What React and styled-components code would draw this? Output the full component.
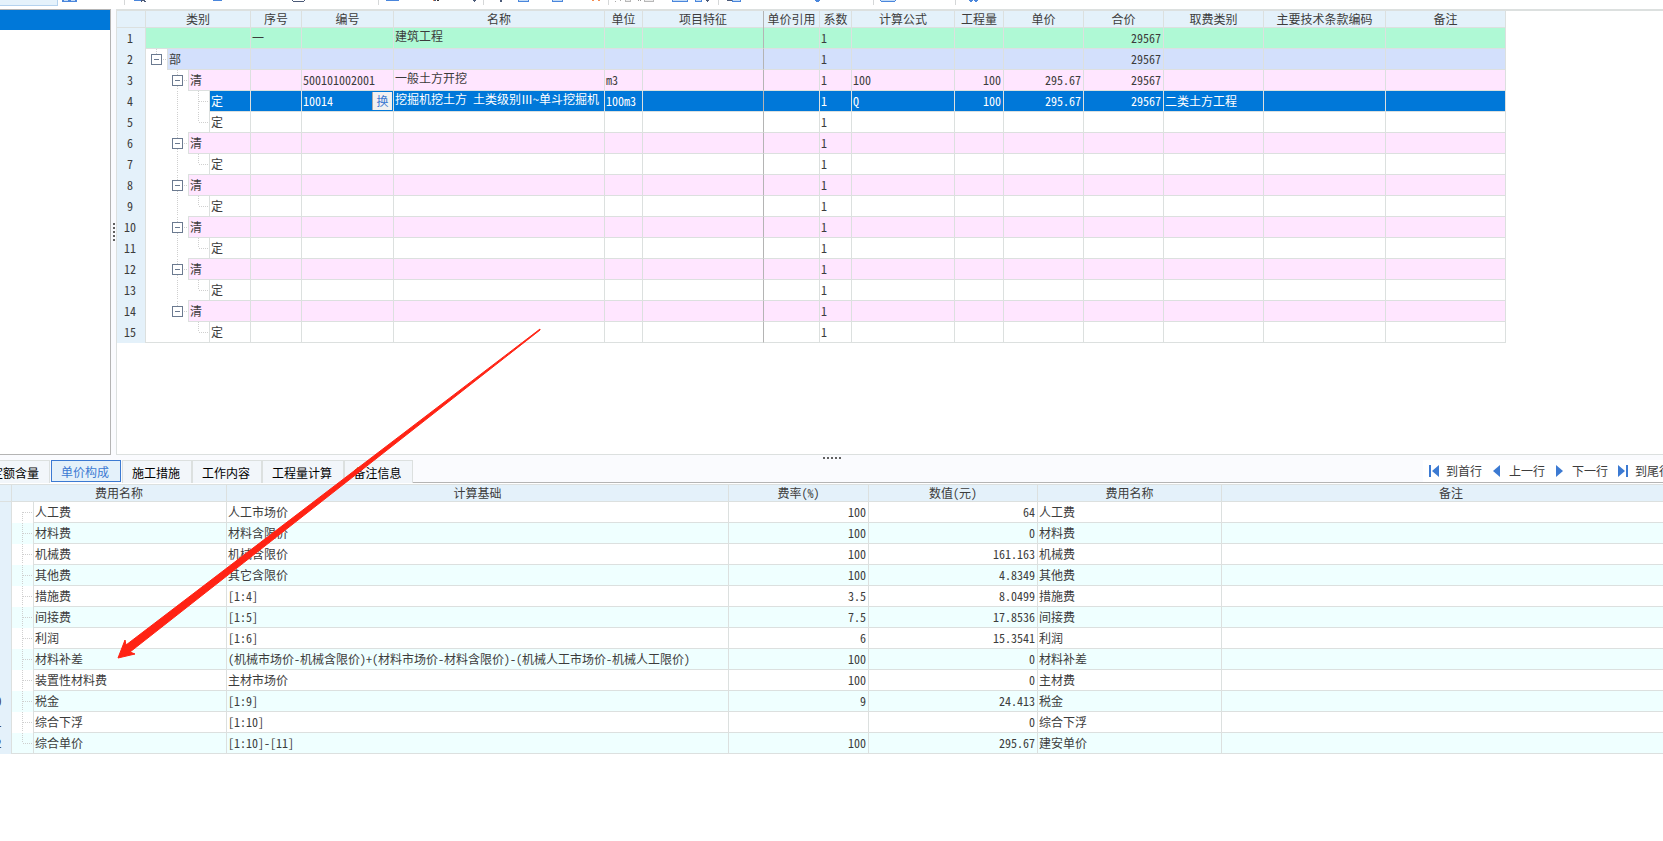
import React from "react";
import styled, { createGlobalStyle, css } from "styled-components";

const color = {
  line: "#dce0df",
  lineDark: "#b4b4b4",
  head: "#e4f1fa",
  accent: "#3c7ad2",
  selected: "#0078d9",
  text: "#3c3c3c",
  chrome: "#fafbfe",
  stripe: "#efffff",
};

const rowFill = {
  total: "#aff9d5",
  part: "#d3e0fc",
  list: "#ffe6ff",
  quota: "#ffffff",
  selected: color.selected,
};

const GlobalStyle = createGlobalStyle`
  * { box-sizing: border-box; }
  html, body { margin: 0; overflow: hidden; background: #fff; }
  body, button {
    font-family: "Noto Sans CJK SC", sans-serif;
    font-size: 12px;
    font-feature-settings: "hwid";
    color: ${color.text};
  }
`;

const Page = styled.div`
  position: relative;
  display: flex;
  flex-direction: column;
  height: 100vh;
  overflow: hidden;
`;

/* ---------- toolbar ---------- */

const Toolbar = styled.header`
  display: flex;
  flex: 0 0 9px;
  align-items: flex-start;
  overflow: hidden;
`;

const ActiveTool = styled.div`
  width: 58px;
  height: 6px;
  background: #e5f2fb;
  border: solid #b4d2ee;
  border-width: 0 1px 1px 0;
`;

const ToolGroup = styled.div`
  width: ${(p) => p.$w}px;
  height: 5px;
  border-right: 1px solid ${(p) => (p.$last ? "transparent" : "#d5d7d8")};
  svg { display: block; }
`;

const B = "#4a86dc";
const L = "#c3dcf8";
const D = "#4c5a78";

/* each icon edge: [x, y, width, height, fill] */
const toolGroups = [
  { w: 67, bits: [[4, 0, 15, 2, B], [6, 0, 4, 1, L], [13, 0, 4, 1, L]] },
  {
    w: 254,
    bits: [[9, 0, 9, 1, B], [16, 0, 4, 1, D], [16, 1, 1, 1, D], [19, 1, 2, 1, D], [88, 0, 9, 1, B],
      [167, 0, 1, 1, D], [179, 0, 1, 1, D], [168, 1, 11, 1, D]],
  },
  {
    w: 105,
    bits: [[7, 0, 13, 1, B], [54, 0, 1, 1, "#ee8144"], [55, 0, 2, 1, D], [58, 0, 2, 1, "#333"], [94, 0, 3, 1, D], [95, 1, 1, 1, D]],
  },
  {
    w: 125,
    bits: [[16, 0, 2, 2, D], [34, 0, 11, 2, B], [35, 0, 9, 1, L], [68, 0, 11, 2, B], [69, 0, 9, 1, L],
      [108, 0, 2, 1, "#f68c50"], [114, 0, 2, 1, "#f68c50"]],
  },
  {
    w: 110,
    bits: [[6, 1, 1, 1, "#aaa"], [11, 0, 1, 1, "#aaa"], [16, 0, 6, 2, "#b8b8b8"], [17, 0, 4, 1, "#eee"],
      [29, 0, 1, 1, "#999"], [31, 0, 1, 1, "#999"], [35, 0, 10, 2, "#b8b8b8"], [36, 0, 8, 1, "#eee"],
      [63, 0, 16, 2, B], [64, 0, 14, 1, L], [86, 0, 7, 2, B], [87, 0, 5, 1, L], [97, 0, 3, 1, D], [98, 1, 1, 1, D]],
  },
  { w: 155, bits: [[8, 0, 6, 1, D], [13, 0, 9, 2, B], [14, 0, 7, 1, L], [96, 0, 5, 1, B], [97, 1, 3, 1, B]] },
  { w: 82, bits: [[6, 0, 16, 1, B], [7, 1, 14, 1, B], [7, 0, 14, 1, L]] },
  { w: 40, last: true, bits: [[13, 0, 4, 1, B], [18, 0, 4, 1, B], [14, 1, 2, 1, B], [19, 1, 2, 1, B]] },
];

/* ---------- upper pane ---------- */

const Upper = styled.main`
  display: flex;
  flex: 1 1 0;
  min-height: 0;
`;

const Navigator = styled.aside`
  flex: 0 0 111px;
  border: solid ${color.lineDark};
  border-width: 1px 1px 1px 0;
`;

const NavigatorItem = styled.div`
  height: 20px;
  background: ${color.selected};
`;

const Grip = styled.div`
  display: flex;
  flex: 0 0 5px;
  flex-direction: ${(p) => (p.$vertical ? "column" : "row")};
  align-items: center;
  justify-content: center;
  gap: 2px;
  background: ${color.chrome};
  i { width: 2px; height: 2px; background: #606060; }
`;

const GridPane = styled.section`
  flex: 1 1 0;
  min-width: 0;
  border: solid ${color.line};
  border-width: 2px 0 1px 1px;
  overflow: hidden;
`;

const Sheet = styled.table`
  table-layout: fixed;
  border-collapse: separate;
  border-spacing: 0;
  width: ${(p) => (p.$fluid ? "100%" : "1389px")};
`;

const HeadCell = styled.th`
  height: 17px;
  padding: 0 0 2px;
  font-weight: 400;
  line-height: 15px;
  white-space: nowrap;
  background: ${color.head};
  border: solid ${(p) => (p.$frozen ? color.lineDark : color.line)};
  border-width: 0 1px 0 0;
  box-shadow: inset 0 -1px ${color.line};
`;

const NumberCell = styled.th`
  height: 21px;
  padding: 0 2px 2px 0;
  font-weight: 400;
  line-height: 19px;
  text-align: center;
  background: ${color.head};
  border-right: 1px solid ${color.line};
`;

const Cell = styled.td`
  height: 21px;
  padding: 0 2px 0 1px;
  line-height: 20px;
  white-space: nowrap;
  overflow: hidden;
  text-align: ${(p) => (p.$right ? "right" : "left")};
  color: ${(p) => (p.$kind === "selected" ? "#fff" : "inherit")};
  background: ${(p) => (p.$kind ? rowFill[p.$kind] : "transparent")};
  border: solid ${color.line};
  border-width: 0 1px 1px 0;
  ${(p) => p.$frozen && css`border-right-color: ${color.lineDark};`}
  ${(p) => p.$raised && css`line-height: 16px; vertical-align: top;`}
`;

const TreeCell = styled.td`
  height: 21px;
  padding: 0;
  border-right: 1px solid ${color.line};
`;

const TreeLine = styled.div`
  display: flex;
  height: 21px;
`;

const Segment = styled.span`
  display: grid;
  flex: 0 0 21px;
  place-items: center;
  border-bottom: 1px solid ${(p) => (p.$underline ? color.line : "transparent")};
  > * { grid-area: 1 / 1; }
`;

const Toggle = styled.button`
  display: grid;
  place-items: center;
  width: 11px;
  height: 11px;
  padding: 0;
  background: #fff;
  border: 1px solid #6b7a90;
  &::before { content: ""; width: 5px; height: 1px; background: #6b7a90; }
`;

const TreeLabel = styled.span`
  flex: 1;
  padding-left: 1px;
  line-height: 20px;
  color: ${(p) => (p.$kind === "selected" ? "#fff" : "inherit")};
  background: ${(p) => (p.$kind ? rowFill[p.$kind] : "transparent")};
  border-left: ${(p) => (p.$flush ? 0 : 1)}px solid ${color.line};
  border-bottom: 1px solid ${color.line};
`;

const CodeBox = styled.div`
  display: flex;
  align-items: center;
  justify-content: space-between;
`;

const SwapButton = styled.button`
  width: 20px;
  height: 18px;
  margin-right: -1px;
  padding: 0;
  line-height: 16px;
  color: ${color.accent};
  background: #f1f1f1;
  border: solid #aaa;
  border-width: 0 0 0 1px;
`;

/* dotted connectors of one tree level */
function Segm({ up, down, right, toggle, underline }) {
  const dots = { stroke: "#cfcfcf", strokeWidth: 1, strokeDasharray: "1 1", fill: "none" };
  return (
    <Segment $underline={underline}>
      <svg width="21" height="20" viewBox="0 0 21 20" aria-hidden="true">
        {up && <path d="M10.5 0V10" {...dots} />}
        {down && <path d="M10.5 10V20" {...dots} />}
        {right && <path d="M11 10.5H21" {...dots} />}
      </svg>
      {toggle && <Toggle type="button" aria-label="折叠" />}
    </Segment>
  );
}

const quotaColumns = [
  ["", 29], ["类别", 105], ["序号", 51], ["编号", 92], ["名称", 211], ["单位", 38], ["项目特征", 121],
  ["单价引用", 56], ["系数", 32], ["计算公式", 103], ["工程量", 49], ["单价", 80], ["合价", 80],
  ["取费类别", 100], ["主要技术条款编码", 122], ["备注", 120],
];

const emptyPairs = [0, 1, 2, 3, 4].flatMap(() => [
  { kind: "list", level: 2, label: "清" },
  { kind: "quota", level: 3, label: "定" },
]);

const quotaRows = [
  { kind: "total", level: 0, label: "", serial: "一", name: "建筑工程", sum: "29567" },
  { kind: "part", level: 1, label: "部", sum: "29567" },
  { kind: "list", level: 2, label: "清", code: "500101002001", name: "一般土方开挖", unit: "m3", formula: "100", qty: "100", price: "295.67", sum: "29567" },
  { kind: "selected", level: 3, label: "定", code: "10014", swap: true, name: "挖掘机挖土方 土类级别Ⅲ~单斗挖掘机", unit: "100m3", formula: "Q", qty: "100", price: "295.67", sum: "29567", fee: "二类土方工程" },
  { kind: "quota", level: 3, label: "定" },
  ...emptyPairs,
];

function QuotaRow({ row, index }) {
  const { kind, level } = row;
  const next = quotaRows[index + 1];
  const nextLevel = next ? next.level : 0;
  const moreLists = quotaRows.slice(index + 1).some((r) => r.level === 2);
  const line = (depth) => nextLevel <= depth;
  return (
    <tr>
      <NumberCell scope="row">{index + 1}</NumberCell>
      <TreeCell>
        <TreeLine>
          {level >= 1 && <Segm toggle={level === 1} up={level === 1} right={level === 1} underline={line(0)} />}
          {level >= 2 && (
            <Segm toggle={level === 2} up={level === 2 || moreLists} down={moreLists} right={level === 2} underline={line(1)} />
          )}
          {level >= 3 && <Segm up right down={nextLevel === 3} underline={line(2)} />}
          <TreeLabel $kind={kind} $flush={level === 0}>{row.label}</TreeLabel>
        </TreeLine>
      </TreeCell>
      <Cell $kind={kind}>{row.serial}</Cell>
      <Cell $kind={kind}>
        {row.swap ? <CodeBox>{row.code}<SwapButton type="button">换</SwapButton></CodeBox> : row.code}
      </Cell>
      <Cell $kind={kind} $raised>{row.name}</Cell>
      <Cell $kind={kind}>{row.unit}</Cell>
      <Cell $kind={kind} $frozen />
      <Cell $kind={kind} />
      <Cell $kind={kind}>1</Cell>
      <Cell $kind={kind}>{row.formula}</Cell>
      <Cell $kind={kind} $right>{row.qty}</Cell>
      <Cell $kind={kind} $right>{row.price}</Cell>
      <Cell $kind={kind} $right>{row.sum}</Cell>
      <Cell $kind={kind}>{row.fee}</Cell>
      <Cell $kind={kind} />
      <Cell $kind={kind} />
    </tr>
  );
}

/* ---------- lower pane ---------- */

const Lower = styled.section`
  display: flex;
  flex: 0 0 386px;
  flex-direction: column;
  margin: 0 -18px;
`;

const TabBar = styled.div`
  display: flex;
  flex: 0 0 23px;
  align-items: flex-end;
  background: ${color.chrome};
`;

const Tabs = styled.div`
  display: flex;
  align-items: flex-end;
  height: 23px;
`;

const Tab = styled.button`
  width: ${(p) => p.$w}px;
  height: 23px;
  padding: 1px 2px 0 0;
  line-height: 18px;
  color: #000;
  white-space: nowrap;
  background: #f2f6fa;
  border: 1px solid ${color.line};
  border-bottom: 0;
  ${(p) =>
    p.$active &&
    css`
      height: 22px;
      margin: 0 1px 1px;
      color: ${color.accent};
      background: ${color.head};
      border: 1px solid ${color.accent};
    `}
`;

const TabFill = styled.div`
  flex: 1;
  align-self: stretch;
  border-bottom: 1px solid ${color.lineDark};
`;

const RowNav = styled.nav`
  display: flex;
  align-self: stretch;
  padding: 2px 0 0 6px;
  background: #fff;
  border-bottom: 1px solid ${color.lineDark};
`;

const NavButton = styled.button`
  display: flex;
  align-items: center;
  gap: 6px;
  width: 63px;
  height: 18px;
  padding: 0;
  line-height: 18px;
  white-space: nowrap;
  background: none;
  border: 0;
  svg { flex: 0 0 11px; }
`;

const SplitBar = styled.div`
  display: flex;
  flex: 0 0 5px;
  justify-content: center;
  background: ${color.chrome};
`;

const CostTable = styled.div`
  border-top: 1px solid ${color.line};
  margin-top: 1px;
`;

const CostRow = styled.tr`
  background: ${(p) => (p.$striped ? color.stripe : "#fff")};
`;

const costColumns = [["", 30], ["费用名称", 215], ["计算基础", 502], ["费率(%)", 140], ["数值(元)", 169], ["费用名称", 184], ["备注", null]];

const costRows = [
  ["人工费", "人工市场价", "100", "64", "人工费"],
  ["材料费", "材料含限价", "100", "0", "材料费"],
  ["机械费", "机械含限价", "100", "161.163", "机械费"],
  ["其他费", "其它含限价", "100", "4.8349", "其他费"],
  ["措施费", "[1:4]", "3.5", "8.0499", "措施费"],
  ["间接费", "[1:5]", "7.5", "17.8536", "间接费"],
  ["利润", "[1:6]", "6", "15.3541", "利润"],
  ["材料补差", "(机械市场价-机械含限价)+(材料市场价-材料含限价)-(机械人工市场价-机械人工限价)", "100", "0", "材料补差"],
  ["装置性材料费", "主材市场价", "100", "0", "主材费"],
  ["税金", "[1:9]", "9", "24.413", "税金"],
  ["综合下浮", "[1:10]", "", "0", "综合下浮"],
  ["综合单价", "[1:10]-[11]", "100", "295.67", "建安单价"],
];

const tabs = [["定额含量", 68], ["单价构成", 70], ["施工措施", 70], ["工作内容", 70], ["工程量计算", 82], ["备注信息", 69]];

const navItems = [
  ["到首行", "M0 0H2V12H0ZM10 0V12L3 6Z"],
  ["上一行", "M8 0V12L1 6Z"],
  ["下一行", "M1 0V12L8 6Z"],
  ["到尾行", "M0 0V12L7 6ZM8 0H10V12H8Z"],
];

const Annotation = styled.svg`
  position: absolute;
  left: 110px;
  top: 320px;
  pointer-events: none;
`;

const Dots = () => [0, 1, 2, 3, 4].map((n) => <i key={n} />);

export default function App() {
  return (
    <Page>
      <GlobalStyle />
      <Toolbar>
        <ActiveTool />
        {toolGroups.map((g, i) => (
          <ToolGroup key={i} $w={g.w} $last={g.last}>
            <svg width={g.w - 1} height="3" aria-hidden="true">
              {g.bits.map(([x, y, w, h, fill], n) => (
                <rect key={n} x={x} y={y} width={w} height={h} fill={fill} />
              ))}
            </svg>
          </ToolGroup>
        ))}
      </Toolbar>

      <Upper>
        <Navigator>
          <NavigatorItem />
        </Navigator>
        <Grip $vertical><Dots /></Grip>
        <GridPane>
          <Sheet>
            <colgroup>
              {quotaColumns.map(([, w], i) => <col key={i} width={w} />)}
            </colgroup>
            <thead>
              <tr>
                {quotaColumns.map(([title], i) => (
                  <HeadCell key={i} scope="col" $frozen={title === "项目特征"}>{title}</HeadCell>
                ))}
              </tr>
            </thead>
            <tbody>
              {quotaRows.map((row, i) => <QuotaRow key={i} row={row} index={i} />)}
            </tbody>
          </Sheet>
        </GridPane>
      </Upper>

      <Lower>
        <SplitBar><Grip><Dots /></Grip></SplitBar>
        <TabBar>
          <Tabs>
            {tabs.map(([label, w], i) => (
              <Tab key={label} type="button" $w={w} $active={i === 1}>{label}</Tab>
            ))}
          </Tabs>
          <TabFill />
          <RowNav>
            {navItems.map(([label, d]) => (
              <NavButton key={label} type="button">
                <svg width="11" height="12" viewBox="0 0 11 12" aria-hidden="true"><path d={d} fill={color.accent} /></svg>
                {label}
              </NavButton>
            ))}
          </RowNav>
        </TabBar>
        <CostTable>
          <Sheet $fluid>
            <colgroup>
              {costColumns.map(([, w], i) => <col key={i} width={w ?? undefined} />)}
            </colgroup>
            <thead>
              <tr>
                {costColumns.map(([title], i) => <HeadCell key={i} scope="col">{title}</HeadCell>)}
              </tr>
            </thead>
            <tbody>
              {costRows.map(([name, basis, rate, value, alias], i) => (
                <CostRow key={name} $striped={i % 2 === 1}>
                  <NumberCell scope="row">{i + 1}</NumberCell>
                  <TreeCell>
                    <TreeLine>
                      <Segm up={i > 0} down={i < costRows.length - 1} right underline={i === costRows.length - 1} />
                      <TreeLabel>{name}</TreeLabel>
                    </TreeLine>
                  </TreeCell>
                  <Cell>{basis}</Cell>
                  <Cell $right>{rate}</Cell>
                  <Cell $right>{value}</Cell>
                  <Cell>{alias}</Cell>
                  <Cell />
                </CostRow>
              ))}
            </tbody>
          </Sheet>
        </CostTable>
      </Lower>

      <Annotation width="432" height="340" viewBox="110 320 432 340" aria-hidden="true">
        <path d="M540 329L126 645L125 640L118 658L135 654L130 652L540 330Z" fill="#ff2314" stroke="#ff2314" strokeWidth="1" strokeLinejoin="round" />
      </Annotation>
    </Page>
  );
}
